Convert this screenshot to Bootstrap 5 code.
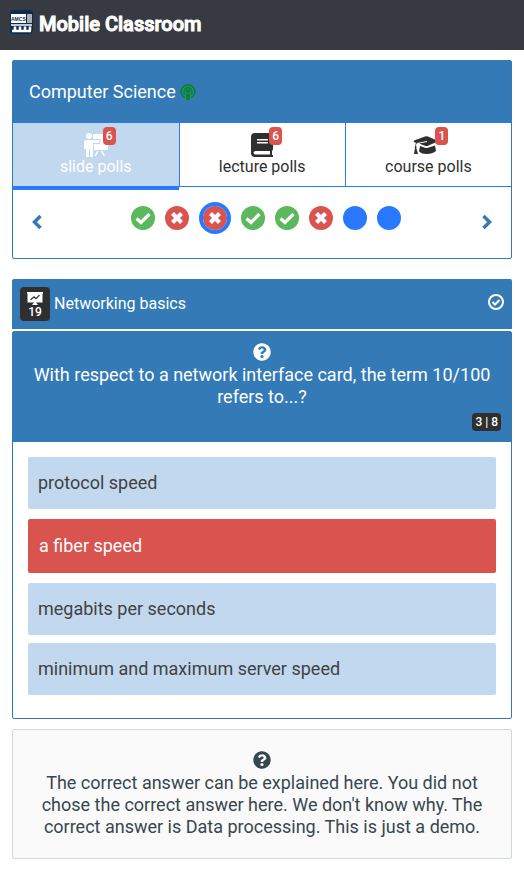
<!DOCTYPE html>
<html lang="en">
<head>
<meta charset="utf-8">
<meta name="viewport" content="width=device-width, initial-scale=1">
<title>Mobile Classroom</title>
<link href="https://cdn.jsdelivr.net/npm/bootstrap@5.3.0/dist/css/bootstrap.min.css" rel="stylesheet">
<style>
:root { --brand: #337ab7; --accent: #2979ff; --pale: #c1d8ef; --ok: #5cb85c; --bad: #d9534f; --ink: #2f2f2f; }
body { font-family: Roboto, "Liberation Sans", sans-serif; font-size: 16px; line-height: 22px; color: #37474f; background: #fff; }
svg { display: block; fill: currentColor; flex: none; }
.topbar { background: #373a40; height: 50px; padding: 0 10px; }
.topbar a { font-size: 20px; font-weight: 500; -webkit-text-stroke: 1px #fff; gap: 6px; margin: 0; padding: 0 0 6px; }
.topbar a span { padding-top: 4px; }
.page { padding: 10px 12px; }
.panel { border: 1px solid var(--brand); border-radius: 2px; }
.brand-bg { background: var(--brand); color: #fff; }
.course-head { height: 61px; padding: 0 16px; font-size: 18px; }
.course-head h1, .question h3 { font-size: 18px; font-weight: 400; line-height: 22px; }
.poll-tab { height: 65px; padding: 0; border: solid var(--accent); border-width: 1px 0 1px 1px; background: #fff; color: var(--ink); line-height: 20px; }
.poll-tab:first-child { border-left: 0; }
.poll-tab.current { background: var(--pale); color: #fff; box-shadow: 0 3px 0 var(--accent); }
.poll-icon { position: relative; width: 24px; height: 24px; margin: 0 auto; }
.chip { display: block; font-weight: 500; font-size: 12px; line-height: 18px; border-radius: 4px; color: #fff; text-align: center; }
.count { position: absolute; left: 19px; top: -6px; width: 13px; background: var(--bad); }
.pager { height: 71px; padding: 0 16px 10px; }
.step { padding: 0; border: 0; background: none; color: var(--brand); }
.dots { gap: 10px; padding-left: 8px; }
.dot { width: 24px; height: 24px; padding: 0; border: 0; border-radius: 50%; color: #fff; background: var(--accent); }
.dot.right { background: var(--ok); }
.dot.wrong { background: var(--bad); }
.dot.active { outline: 4px solid var(--accent); margin: 0 4px; }
.topic-head { height: 50px; margin-top: 20px; padding: 0 8px; border-radius: 2px 2px 0 0; }
.topic-head h2 { font-size: 16px; font-weight: 400; line-height: 22px; }
.slide-no { width: 30px; height: 34px; padding-top: 5px; background: var(--ink); line-height: 13px; }
.question { min-height: 110px; padding: 11px 10px; }
.question svg { margin-bottom: 3px; }
.question .chip { padding: 0 3px; background: var(--ink); }
.answers { gap: 8px; padding: 15px 15px 23px; }
.answer { min-height: 52px; padding: 0 10px; border: 0; border-radius: 2px; background: var(--pale); color: #424242; font-size: 18px; text-align: left; }
.answer.wrong { min-height: 54px; margin: 2px 0; padding: 0 11px; background: var(--bad); color: #fff; }
.poll { margin: 2px 0 10px; }
.note { background: #fafafa; border: 1px solid #cfd8dc; border-radius: 2px; padding: 21px 20px 20px; font-size: 18px; }
.note svg { margin-bottom: 3px; }
</style>
</head>
<body>
<svg class="d-none" aria-hidden="true">
  <symbol id="tick" viewBox="0 0 24 24"><path d="M5.500 12.500l4.500 4L18.500 8" fill="none" stroke="#fff" stroke-width="3.200"/></symbol>
  <symbol id="cross" viewBox="0 0 24 24"><path d="M7.500 7.500l9 9m0-9l-9 9" fill="none" stroke="#fff" stroke-width="4.200"/></symbol>
  <symbol id="help" viewBox="0 0 512 512"><path d="M504 256c0 137-111 248-248 248S8 393 8 256 119 8 256 8s248 111 248 248zM262.700 90c-54.500 0-89.300 23-116.500 63.800-3.500 5.300-2.400 12.400 2.700 16.300l34.700 26.300c5.200 3.900 12.600 3 16.700-2.100 17.900-22.700 30.100-35.800 57.300-35.800 20.400 0 45.700 13.100 45.700 33 0 15-12.400 22.700-32.500 34C247.100 238.500 216 254.900 216 296v4c0 6.600 5.400 12 12 12h56c6.600 0 12-5.400 12-12v-1.300c0-28.500 83.200-29.600 83.200-106.700 0-58-60.200-102-116.500-102zM256 338c-25.400 0-46 20.600-46 46s20.600 46 46 46 46-20.600 46-46-20.600-46-46-46z"/></symbol>
</svg>

<header class="topbar navbar align-items-center">
  <a class="navbar-brand d-flex align-items-center text-white" href="#">
    <svg width="23" height="24" viewBox="0 0 23 24">
      <rect width="23" height="24" rx="4" fill="#0b2c52"/>
      <rect x="1" y="4" width="15" height="9" fill="#fff"/>
      <rect x="17" y="4" width="5" height="9" fill="#a9b0b5"/>
      <text x="1" y="11" font-family="Liberation Sans, sans-serif" font-size="5" font-weight="700" fill="#0b2c52" stroke="none">AMCS</text>
      <path d="M1 15h21" stroke="#fff" stroke-width="1.500"/>
      <path d="M2 21h19M5 16.500v4M10 16.500v4M15 16.500v4M20 16.500v4" stroke="#fff" stroke-width="2.600" fill="none"/>
    </svg>
    <span>Mobile Classroom</span>
  </a>
</header>

<main class="page">
  <section class="panel">
    <div class="course-head brand-bg d-flex align-items-center">
      <h1 class="mb-0 me-1">Computer Science</h1>
      <svg width="16" height="18" viewBox="0 0 17 18" color="#008b00" role="img" aria-label="Live">
        <path d="M5 15A7.300 7.300 0 1 1 12 15M5.300 11.500A4.300 4.300 0 1 1 11.700 11.500" fill="none" stroke="currentColor" stroke-width="1.500"/>
        <circle cx="8.500" cy="8" r="2.300"/><path d="M6.200 11.500q2.300-1 4.600 0l-.8 5.500q-1.500 1.400-3 0z"/>
      </svg>
    </div>
    <nav class="d-flex" aria-label="Poll types">
      <button type="button" class="poll-tab current flex-fill w-100" aria-current="true">
        <span class="poll-icon d-block">
          <svg width="25" height="24" viewBox="0 0 25 24"><circle cx="5" cy="3" r="3"/><path d="M0 9.500Q0 7 3 7h12.500v3H9v14H6v-8H5v8H2v-8H0zM9 1h15v16H10v-6h6.500V6H9zM13 18h1.500L12 23h-1.500zM17 18h1.500l2.500 5h-1.500z"/></svg>
          <span class="chip count">6</span>
        </span>slide polls
      </button>
      <button type="button" class="poll-tab flex-fill w-100">
        <span class="poll-icon d-block">
          <svg width="24" height="24" viewBox="0 0 24 24"><path fill-rule="evenodd" d="M5 0h16q2 0 2 2v14q0 1-1 2v4h1v2H5q-4 0-4-4V4q0-4 4-4zM7 6v1.500h11V6zM7 9v1.500h11V9zM5.500 18q-2 0-2 1.700t2 1.700H20V18z"/></svg>
          <span class="chip count">6</span>
        </span>lecture polls
      </button>
      <button type="button" class="poll-tab flex-fill w-100">
        <span class="poll-icon d-block">
          <svg width="24" height="24" viewBox="3 0 24 24" overflow="visible"><path d="M1 7.500L12 3.500q1.500-.5 3 0l9 4q.8.500 0 1.200l-9 4q-1.500.5-3 0L6 10.500 14 9V8L4 10q-1 1-1 3 1 .7.300 2L5 21H1l1-6q-.8-1 .3-2 0-2 .8-3L1 9q-.8-.8 0-1.500zM7 13l5 1.700q1.500.5 3 0l7-2.200 1 5.500q-3.500 3-9 3T6 18.500z"/></svg>
          <span class="chip count">1</span>
        </span>course polls
      </button>
    </nav>
    <div class="pager d-flex align-items-center justify-content-between">
      <button type="button" class="step mt-2" aria-label="Previous question"><svg width="16" height="16" viewBox="0 0 16 16"><path d="M11.500 2L5.500 8l6 6" fill="none" stroke="currentColor" stroke-width="3.500"/></svg></button>
      <div class="dots d-flex">
        <button type="button" class="dot right" aria-label="Question 1, right"><svg width="24" height="24"><use href="#tick"/></svg></button>
        <button type="button" class="dot wrong" aria-label="Question 2, wrong"><svg width="24" height="24"><use href="#cross"/></svg></button>
        <button type="button" class="dot wrong active" aria-label="Question 3, wrong" aria-current="step"><svg width="24" height="24"><use href="#cross"/></svg></button>
        <button type="button" class="dot right" aria-label="Question 4, right"><svg width="24" height="24"><use href="#tick"/></svg></button>
        <button type="button" class="dot right" aria-label="Question 5, right"><svg width="24" height="24"><use href="#tick"/></svg></button>
        <button type="button" class="dot wrong" aria-label="Question 6, wrong"><svg width="24" height="24"><use href="#cross"/></svg></button>
        <button type="button" class="dot" aria-label="Question 7"></button>
        <button type="button" class="dot" aria-label="Question 8"></button>
      </div>
      <button type="button" class="step mt-2" aria-label="Next question"><svg width="16" height="16" viewBox="0 0 16 16"><path d="M4.500 2l6 6-6 6" fill="none" stroke="currentColor" stroke-width="3.500"/></svg></button>
    </div>
  </section>

  <section>
    <div class="topic-head brand-bg d-flex align-items-center">
      <span class="chip slide-no me-1">
        <svg class="mx-auto" width="18" height="14" viewBox="0 0 18 14"><path fill-rule="evenodd" d="M1 0h16v1.500h-.5v9H10L12 13h-6l2-2.500H1.500v-9H1zM4 7.500l1 .8 3-2.500 2 1.700 4-4-1-.8-3 3-2-1.700z"/></svg>19
      </span>
      <h2 class="mb-0 me-auto">Networking basics</h2>
      <svg class="mb-1" width="16" height="16" viewBox="0 0 16 16" role="img" aria-label="Answered"><path d="M4.500 8l2.500 2.500 4.500-4.500" fill="none" stroke="currentColor" stroke-width="2"/><circle cx="8" cy="8" r="7" fill="none" stroke="currentColor" stroke-width="2"/></svg>
    </div>
    <div class="panel poll">
      <div class="question brand-bg d-flex flex-column align-items-center text-center">
        <svg width="18" height="18"><use href="#help"/></svg>
        <h3 class="mb-0">With respect to a network interface card, the term 10/100 refers to...?</h3>
        <span class="chip mt-auto align-self-end">3 | 8</span>
      </div>
      <div class="answers d-flex flex-column">
        <button type="button" class="answer">protocol speed</button>
        <button type="button" class="answer wrong">a fiber speed</button>
        <button type="button" class="answer">megabits per seconds</button>
        <button type="button" class="answer">minimum and maximum server speed</button>
      </div>
    </div>
  </section>

  <aside class="note text-center">
    <svg class="mx-auto" width="18" height="18"><use href="#help"/></svg>
    The correct answer can be explained here. You did not chose the correct answer here. We don't know why. The correct answer is Data processing. This is just a demo.
  </aside>
</main>
<script src="https://cdn.jsdelivr.net/npm/bootstrap@5.3.0/dist/js/bootstrap.bundle.min.js"></script>
</body>
</html>
